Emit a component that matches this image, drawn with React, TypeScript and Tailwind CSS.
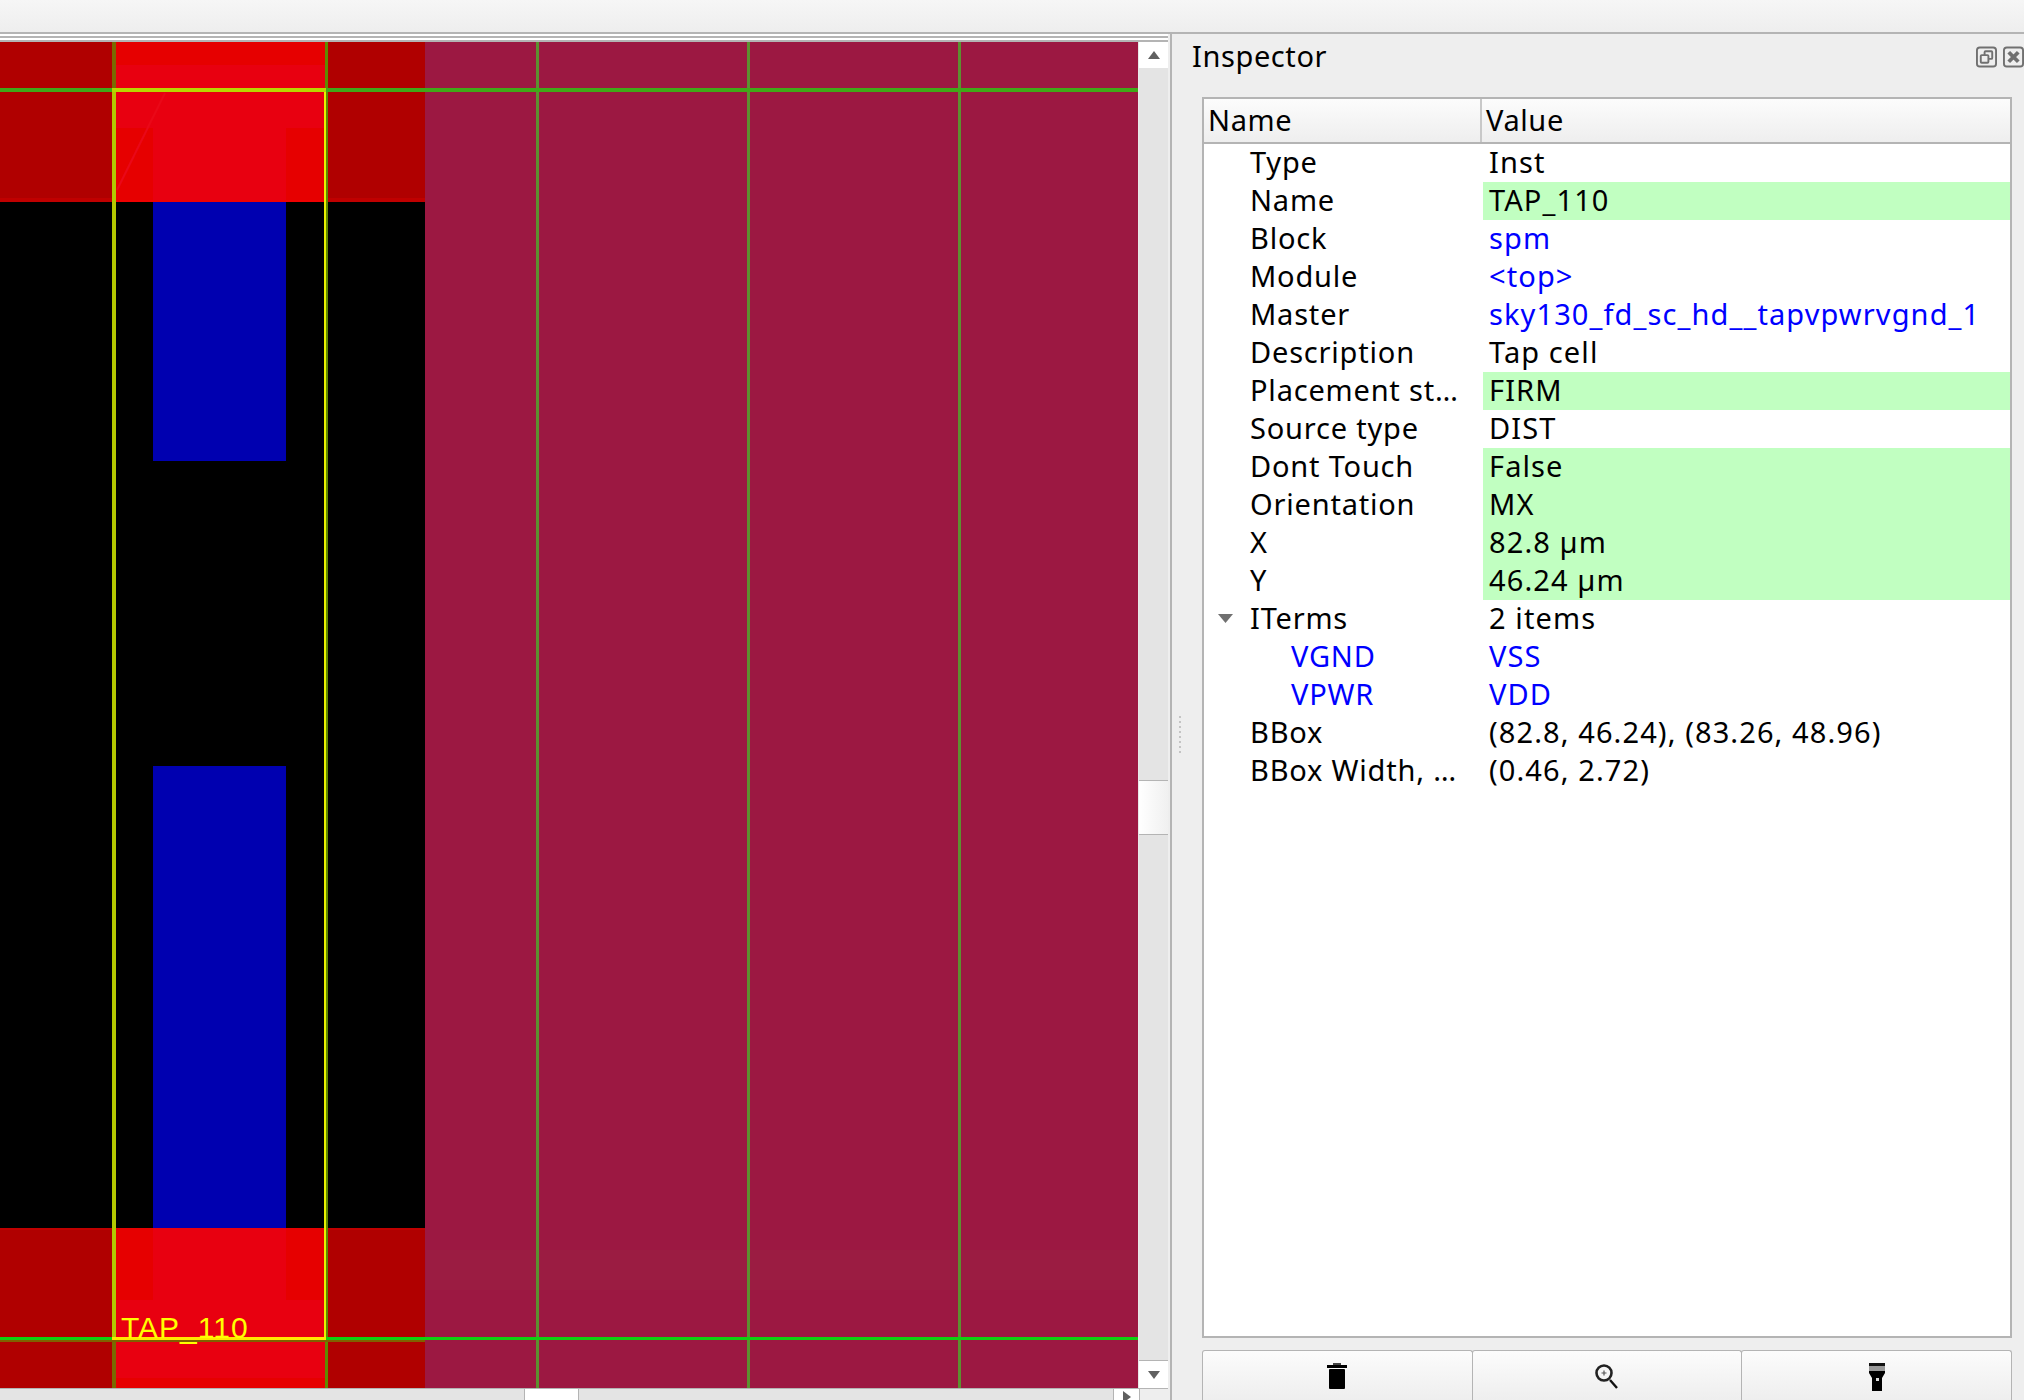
import type { ReactNode } from "react";

const FONT = "font-['Noto_Sans',sans-serif]";

type Row = {
  name: string;
  value: string;
  edit?: boolean;
  link?: boolean;
  nameLink?: boolean;
  child?: boolean;
  open?: boolean;
};

const rows: Row[] = [
  { name: "Type", value: "Inst" },
  { name: "Name", value: "TAP_110", edit: true },
  { name: "Block", value: "spm", link: true },
  { name: "Module", value: "<top>", link: true },
  { name: "Master", value: "sky130_fd_sc_hd__tapvpwrvgnd_1", link: true },
  { name: "Description", value: "Tap cell" },
  { name: "Placement st…", value: "FIRM", edit: true },
  { name: "Source type", value: "DIST" },
  { name: "Dont Touch", value: "False", edit: true },
  { name: "Orientation", value: "MX", edit: true },
  { name: "X", value: "82.8 µm", edit: true },
  { name: "Y", value: "46.24 µm", edit: true },
  { name: "ITerms", value: "2 items", open: true },
  { name: "VGND", value: "VSS", link: true, nameLink: true, child: true },
  { name: "VPWR", value: "VDD", link: true, nameLink: true, child: true },
  { name: "BBox", value: "(82.8, 46.24), (83.26, 48.96)" },
  { name: "BBox Width, …", value: "(0.46, 2.72)" },
];

function LayoutView() {
  return (
    <svg width="1138" height="1346" viewBox="0 42 1138 1346" className="block shrink-0" shapeRendering="crispEdges">
      <rect x="0" y="42" width="1138" height="1346" fill="#9c1842" />
      <rect x="426" y="1250" width="712" height="40" fill="#9b1c42" />
      <rect x="0" y="42" width="425" height="1346" fill="#b00000" />
      <rect x="0" y="198" width="425" height="4" fill="#c00000" />
      <rect x="0" y="202" width="425" height="1026" fill="#000000" />
      <rect x="0" y="1228" width="425" height="2" fill="#c00000" />

      {/* tap cell */}
      <rect x="116" y="42" width="209" height="160" fill="#e80010" />
      <rect x="116" y="42" width="209" height="23" fill="#e60000" />
      <rect x="116" y="128" width="37" height="72" fill="#e60000" />
      <rect x="286" y="128" width="39" height="72" fill="#e60000" />
      <rect x="116" y="200" width="209" height="2" fill="#f00000" />
      <rect x="116" y="1228" width="209" height="160" fill="#e80010" />
      <rect x="116" y="1228" width="37" height="72" fill="#e60000" />
      <rect x="286" y="1228" width="39" height="72" fill="#e60000" />
      <rect x="116" y="1378" width="209" height="10" fill="#e60000" />
      <line x1="117" y1="190" x2="165" y2="93" stroke="#ea0818" strokeWidth="2" shapeRendering="auto" />
      <rect x="153" y="202" width="133" height="259" fill="#0000b0" />
      <rect x="153" y="766" width="133" height="462" fill="#0000b0" />

      {/* tracks */}
      <rect x="112" y="42" width="4" height="1346" fill="#7a6a00" />
      <rect x="325" y="42" width="3" height="1346" fill="#5f8a00" />
      <rect x="536" y="42" width="3" height="1346" fill="#5c9030" />
      <rect x="747" y="42" width="3" height="1346" fill="#5c9030" />
      <rect x="958" y="42" width="3" height="1346" fill="#5c9030" />
      <rect x="0" y="88" width="1138" height="4" fill="#40a818" />
      <rect x="0" y="1337" width="1138" height="3" fill="#10d010" />
      <rect x="0" y="1340" width="425" height="2" fill="#806000" />

      {/* selection */}
      <rect x="112" y="88" width="4" height="1251" fill="#b4c800" />
      <rect x="324" y="88" width="2" height="1251" fill="#e8f000" />
      <rect x="112" y="88" width="214" height="4" fill="#b8d800" />
      <rect x="112" y="1337" width="214" height="3" fill="#ffe800" />
      <text x="121" y="1338" fill="#ffff00" fontSize="30" letterSpacing="1" fontFamily="'Liberation Sans', sans-serif" shapeRendering="auto">
        TAP_110
      </text>
    </svg>
  );
}

function ScrollArrow({ dir }: { dir: "up" | "down" | "left" | "right" }) {
  const points = {
    up: "0,8 12,8 6,0",
    down: "0,0 12,0 6,8",
    left: "8,0 8,12 0,6",
    right: "0,0 0,12 8,6",
  }[dir];
  const box = dir === "up" || dir === "down" ? "0 0 12 8" : "0 0 8 12";
  return (
    <svg viewBox={box} className={dir === "up" || dir === "down" ? "h-2 w-3" : "h-3 w-2"}>
      <polygon points={points} fill="#606060" />
    </svg>
  );
}

function DockIcons() {
  return (
    <div className="flex shrink-0 gap-[6px]">
      <svg width="22" height="22" viewBox="0 0 22 22" fill="none" stroke="#707070" strokeWidth="2">
        <rect x="1" y="1" width="20" height="20" rx="3" />
        <rect x="9" y="5" width="8" height="8" rx="1" />
        <rect x="5" y="9" width="8" height="8" rx="1" fill="#eeeeee" />
      </svg>
      <svg width="22" height="22" viewBox="0 0 22 22" fill="none" stroke="#707070" strokeWidth="2">
        <rect x="1" y="1" width="20" height="20" rx="3" />
        <path d="M6 6 L16 16 M16 6 L6 16" strokeWidth="4" />
      </svg>
    </div>
  );
}

function ToolButton({ children, last }: { children: ReactNode; last?: boolean }) {
  return (
    <button
      className={
        "flex h-[50px] flex-1 items-start justify-center rounded-t-[3px] border border-b-0 border-[#b4b4b4] bg-gradient-to-b from-[#fcfcfc] to-[#eeeeee] pt-[12px] " +
        (last ? "" : "-mr-px")
      }
    >
      {children}
    </button>
  );
}

function TrashIcon() {
  return (
    <svg width="20" height="28" viewBox="0 0 20 28" className="text-black">
      <rect x="6" y="0" width="8" height="2" fill="#444" />
      <rect x="0" y="2" width="20" height="3" fill="#000" />
      <rect x="2" y="6" width="16" height="20" rx="1" fill="#000" />
    </svg>
  );
}

function ZoomIcon() {
  return (
    <svg width="24" height="26" viewBox="0 0 24 26" fill="none">
      <circle cx="9" cy="10" r="7.5" stroke="#222" strokeWidth="2.6" />
      <path d="M15 17 L22 25" stroke="#111" strokeWidth="2.4" />
      <path d="M6.5 10 H11.5 M9 7.5 V12.5" stroke="#555" strokeWidth="1.2" />
    </svg>
  );
}

function FlashlightIcon() {
  return (
    <svg width="16" height="28" viewBox="0 0 16 28">
      <rect x="0" y="0" width="16" height="3" fill="#111" />
      <rect x="0" y="3" width="16" height="5" fill="#999" />
      <path d="M0 8 H16 V10 L13 15 V28 H3 V15 L0 10 Z" fill="#000" />
      <rect x="7" y="15" width="3" height="3" fill="#ddd" />
    </svg>
  );
}

function InspectorRow({ row }: { row: Row }) {
  return (
    <div className="flex h-[38px] text-[29px] leading-[36px]">
      <div className="relative h-full w-[279px] shrink-0 tracking-[0.8px]">
        {row.open && (
          <svg width="15" height="9" viewBox="0 0 15 9" className="absolute left-[14px] top-[14px]">
            <polygon points="0,0 15,0 7.5,9" fill="#707070" />
          </svg>
        )}
        <span
          className={
            "block whitespace-nowrap " +
            (row.child ? "pl-[87px] " : "pl-[46px] ") +
            (row.nameLink ? "text-[#0000ff]" : "text-black")
          }
        >
          {row.name}
        </span>
      </div>
      <div
        className={
          "h-full flex-1 whitespace-nowrap pl-[6px] tracking-[1.1px] " +
          (row.edit ? "bg-[#c1ffc1] " : "") +
          (row.link ? "text-[#0000ff]" : "text-black")
        }
      >
        {row.value}
      </div>
    </div>
  );
}

export default function App() {
  return (
    <div className={"flex h-[1400px] w-[2024px] flex-col overflow-hidden bg-[#eeeeee] " + FONT}>
      {/* toolbar strip */}
      <div className="h-[32px] shrink-0 bg-gradient-to-b from-[#f6f6f6] to-[#eeeeee]" />
      <div className="h-[2px] shrink-0 bg-[#b4b4b4]" />

      <div className="flex min-h-0 flex-1">
        {/* layout viewer */}
        <div className="flex w-[1168px] shrink-0 flex-col">
          <div className="flex h-[8px] shrink-0 flex-col justify-between bg-white">
            <div className="mt-[2px] h-[2px] bg-[#b4b4b4]" />
            <div className="h-[2px] bg-[#b4b4b4]" />
          </div>
          <div className="flex min-h-0 flex-1">
            <LayoutView />
            <div className="flex w-[30px] shrink-0 flex-col border-l border-[#e8e8e8] bg-[#e4e4e4]">
              <div className="flex h-[26px] shrink-0 items-center justify-center bg-white">
                <ScrollArrow dir="up" />
              </div>
              <div className="mt-[712px] h-[55px] shrink-0 border-y border-[#b4b4b4] bg-gradient-to-r from-white to-[#f0f0f0]" />
              <div className="flex-1" />
              <div className="flex h-[28px] shrink-0 items-center justify-center border-t border-[#b4b4b4] bg-white">
                <ScrollArrow dir="down" />
              </div>
            </div>
          </div>
          <div className="flex h-[12px] shrink-0 overflow-hidden border-t border-[#b4b4b4] bg-[#e4e4e4]">
            <div className="ml-[524px] w-[55px] border-x border-[#b4b4b4] bg-white" />
            <div className="flex-1" />
            <div className="flex w-[26px] items-start justify-center border-l border-[#b4b4b4] bg-white pt-[2px]">
              <ScrollArrow dir="right" />
            </div>
            <div className="w-[29px] border-l border-[#b4b4b4] bg-[#eeeeee]" />
          </div>
        </div>

        {/* inspector dock */}
        <div className="ml-[2px] flex min-w-0 flex-1 flex-col border-l-[2px] border-[#b4b4b4]">
          <div className="relative flex min-h-0 flex-1 flex-col pl-[20px]">
            <div className="flex h-[40px] shrink-0 items-center justify-between pt-[2px]">
              <span className="text-[29px] leading-none tracking-[0.6px] text-black">Inspector</span>
              <div className="mt-[3px] w-[48px] overflow-hidden">
                <DockIcons />
              </div>
            </div>
            <div className="absolute left-[7px] top-[682px] flex flex-col gap-[3px]">
              {[0, 1, 2, 3, 4, 5, 6, 7].map((i) => (
                <div key={i} className="h-[2px] w-[2px] bg-[#c4c4c4]" />
              ))}
            </div>

            <div className="ml-[10px] mr-[12px] mt-[23px] flex min-h-0 flex-1 flex-col border-2 border-[#b4b4b4] bg-white">
              <div className="flex h-[45px] shrink-0 border-b-2 border-[#b4b4b4] bg-gradient-to-b from-[#fcfcfc] to-[#eeeeee] text-[29px] leading-[41px] tracking-[0.6px] text-black">
                <div className="w-[278px] shrink-0 border-r-2 border-[#c8c8c8] pl-[4px]">Name</div>
                <div className="flex-1 pl-[4px]">Value</div>
              </div>
              {rows.map((row) => (
                <InspectorRow key={row.name} row={row} />
              ))}
            </div>

            <div className="ml-[10px] mr-[12px] mt-[12px] flex shrink-0">
              <ToolButton>
                <TrashIcon />
              </ToolButton>
              <ToolButton>
                <ZoomIcon />
              </ToolButton>
              <ToolButton last>
                <FlashlightIcon />
              </ToolButton>
            </div>
          </div>
        </div>
      </div>
    </div>
  );
}
